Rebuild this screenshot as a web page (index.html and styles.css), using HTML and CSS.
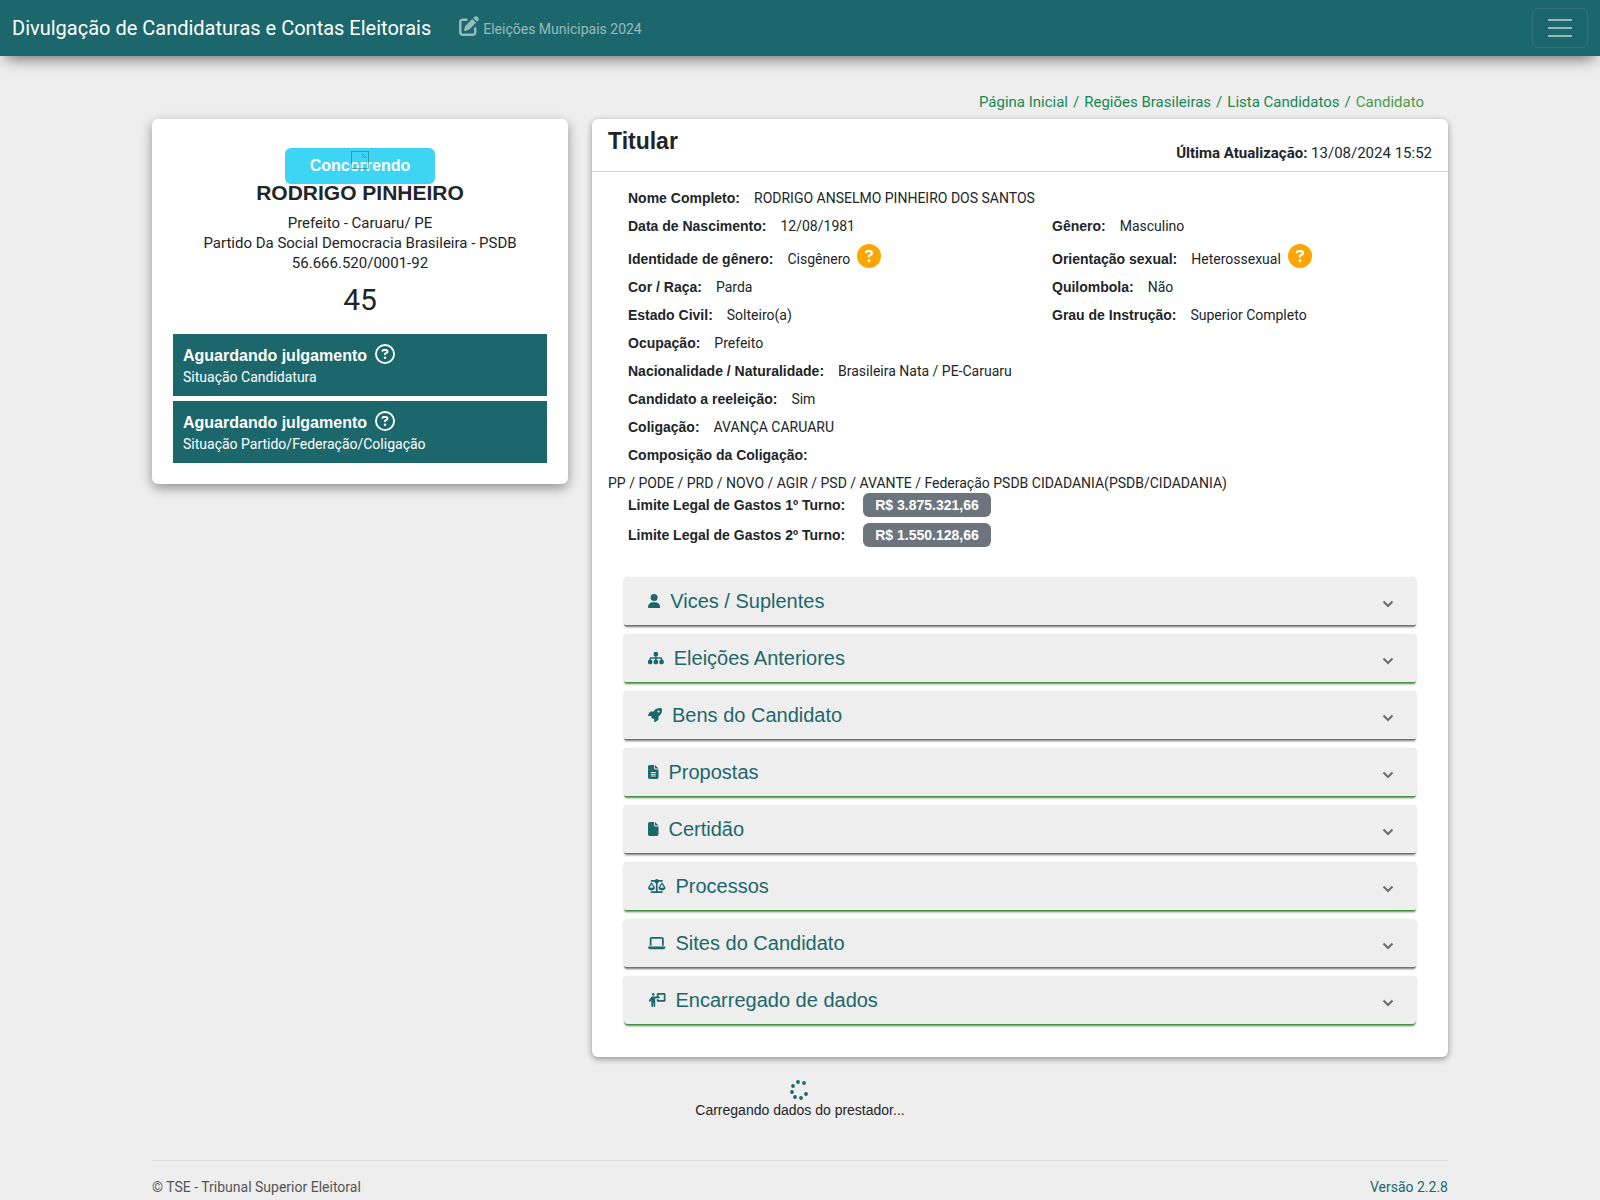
FILE: index.html
```html
<!DOCTYPE html>
<html lang="pt-BR">
<head>
<meta charset="utf-8">
<meta name="viewport" content="width=device-width, initial-scale=1">
<title>Divulgação de Candidaturas e Contas Eleitorais</title>
<link rel="stylesheet" href="styles.css">
</head>
<body>
<svg class="sprite" aria-hidden="true">
  <symbol id="help" viewBox="0 0 512 512"><path d="M169.800 165.300c7.900-22.300 29.100-37.300 52.800-37.300h58.300c34.900 0 63.100 28.300 63.100 63.100c0 22.600-12.100 43.500-31.700 54.800L280 264.400c-.2 13-10.900 23.600-24 23.600c-13.300 0-24-10.700-24-24V250.500c0-8.600 4.600-16.500 12.100-20.800l44.300-25.400c4.700-2.700 7.600-7.700 7.600-13.100c0-8.400-6.800-15.100-15.100-15.100H222.600c-3.400 0-6.400 2.100-7.500 5.300l-.4 1.200c-4.400 12.500-18.200 19-30.600 14.600s-19-18.200-14.600-30.600l.4-1.200zM224 352a32 32 0 1 1 64 0 32 32 0 1 1-64 0z"/></symbol>
  <symbol id="chevron" viewBox="0 0 12 8"><path d="M1.500 1.500 6 6l4.500-4.500" fill="none" stroke="currentColor" stroke-width="2"/></symbol>
</svg>

<nav class="navbar">
  <a class="brand" href="#">Divulgação de Candidaturas e Contas Eleitorais</a>
  <a class="election" href="#">
    <svg viewBox="0 0 512 512" width="20" height="20" aria-hidden="true"><path d="M471.6 21.7c-21.900-21.900-57.300-21.900-79.200 0L362.300 51.700l97.900 97.900 30.100-30.100c21.900-21.900 21.900-57.300 0-79.200L471.600 21.700zm-299.200 220c-6.100 6.100-10.800 13.600-13.500 21.900l-29.600 88.800c-2.900 8.600-.6 18.100 5.800 24.600s15.900 8.700 24.600 5.800l88.800-29.600c8.200-2.700 15.700-7.400 21.900-13.500L437.700 172.300 339.700 74.300 172.400 241.700zM96 64C43 64 0 107 0 160V416c0 53 43 96 96 96H352c53 0 96-43 96-96V320c0-17.700-14.300-32-32-32s-32 14.300-32 32v96c0 17.700-14.300 32-32 32H96c-17.700 0-32-14.300-32-32V160c0-17.700 14.300-32 32-32h96c17.700 0 32-14.300 32-32s-14.300-32-32-32H96z"/></svg>
    <span>Eleições Municipais 2024</span>
  </a>
  <button class="toggler" type="button" aria-label="Abrir menu">
    <svg viewBox="0 0 30 30" width="30" height="30" aria-hidden="true"><path d="M3 7h24M3 15h24M3 23h24" stroke="currentColor" stroke-width="2"/></svg>
  </button>
</nav>

<div class="container">
  <nav class="breadcrumb" aria-label="Navegação">
    <a href="#">Página Inicial</a><span>/</span><a href="#">Regiões Brasileiras</a><span>/</span><a href="#">Lista Candidatos</a><span>/</span><a class="current" href="#">Candidato</a>
  </nav>

  <main class="columns">
    <section class="card profile">
      <div class="status">
        Concorrendo
        <svg class="photo" viewBox="0 0 18 18" width="18" height="18" aria-hidden="true"><path d="M0 .5h18M.5 0v18M17.500 0v18M0 17.500h18" stroke="#1c676b" fill="none"/><path d="M11.500 2.500v4h4zM11.500 2.500l4 4" stroke="#1c676b" fill="none" opacity=".5"/><path d="M4 15c2-4 4-3 5-1l3-2 3 3z" fill="#4caf50" opacity=".5"/></svg>
      </div>
      <h1>RODRIGO PINHEIRO</h1>
      <p class="facts">Prefeito - Caruaru/ PE<br>Partido Da Social Democracia Brasileira - PSDB<br>56.666.520/0001-92</p>
      <p class="number">45</p>
      <div class="judgement">
        <h2>Aguardando julgamento <svg viewBox="0 0 512 512" width="20" height="20" aria-hidden="true"><circle cx="256" cy="256" r="232" fill="none" stroke="currentColor" stroke-width="48"/><use href="#help"/></svg></h2>
        <p>Situação Candidatura</p>
      </div>
      <div class="judgement">
        <h2>Aguardando julgamento <svg viewBox="0 0 512 512" width="20" height="20" aria-hidden="true"><circle cx="256" cy="256" r="232" fill="none" stroke="currentColor" stroke-width="48"/><use href="#help"/></svg></h2>
        <p>Situação Partido/Federação/Coligação</p>
      </div>
    </section>

    <section class="card holder">
      <header class="card-header">
        <h2>Titular</h2>
        <p><b>Última Atualização:</b> 13/08/2024 15:52</p>
      </header>
      <div class="card-body">
        <dl class="details">
          <div class="wide"><dt>Nome Completo:</dt><dd>RODRIGO ANSELMO PINHEIRO DOS SANTOS</dd></div>
          <div><dt>Data de Nascimento:</dt><dd>12/08/1981</dd></div>
          <div><dt>Gênero:</dt><dd>Masculino</dd></div>
          <div class="tall"><dt>Identidade de gênero:</dt><dd>Cisgênero</dd><svg class="hint" viewBox="0 0 512 512" width="24" height="24" aria-hidden="true"><circle cx="256" cy="256" r="256" fill="#ffa500"/><use href="#help"/></svg></div>
          <div class="tall"><dt>Orientação sexual:</dt><dd>Heterossexual</dd><svg class="hint" viewBox="0 0 512 512" width="24" height="24" aria-hidden="true"><circle cx="256" cy="256" r="256" fill="#ffa500"/><use href="#help"/></svg></div>
          <div><dt>Cor / Raça:</dt><dd>Parda</dd></div>
          <div><dt>Quilombola:</dt><dd>Não</dd></div>
          <div><dt>Estado Civil:</dt><dd>Solteiro(a)</dd></div>
          <div><dt>Grau de Instrução:</dt><dd>Superior Completo</dd></div>
          <div class="wide"><dt>Ocupação:</dt><dd>Prefeito</dd></div>
          <div class="wide"><dt>Nacionalidade / Naturalidade:</dt><dd>Brasileira Nata / PE-Caruaru</dd></div>
          <div class="wide"><dt>Candidato a reeleição:</dt><dd>Sim</dd></div>
          <div class="wide"><dt>Coligação:</dt><dd>AVANÇA CARUARU</dd></div>
          <div class="wide coalition"><dt>Composição da Coligação:</dt><dd>PP / PODE / PRD / NOVO / AGIR / PSD / AVANTE / Federação PSDB CIDADANIA(PSDB/CIDADANIA)</dd></div>
          <div class="wide limit"><dt>Limite Legal de Gastos 1º Turno:</dt><dd>R$ 3.875.321,66</dd></div>
          <div class="wide limit"><dt>Limite Legal de Gastos 2º Turno:</dt><dd>R$ 1.550.128,66</dd></div>
        </dl>

        <div class="accordion">
          <button type="button"><svg viewBox="0 0 448 512" height="14" aria-hidden="true"><path d="M224 256A128 128 0 1 0 224 0a128 128 0 1 0 0 256zm-45.700 48C79.800 304 0 383.800 0 482.300C0 498.700 13.300 512 29.700 512H418.300c16.400 0 29.700-13.300 29.700-29.700C448 383.800 368.200 304 269.700 304H178.300z"/></svg><span>Vices / Suplentes</span><svg class="chevron" width="12" height="8" aria-hidden="true"><use href="#chevron"/></svg></button>
          <button type="button"><svg viewBox="0 0 576 512" height="14" aria-hidden="true"><path d="M208 80c0-26.500 21.500-48 48-48h64c26.500 0 48 21.500 48 48v64c0 26.500-21.500 48-48 48h-8v40H464c30.900 0 56 25.100 56 56v32h8c26.500 0 48 21.500 48 48v64c0 26.500-21.500 48-48 48H464c-26.500 0-48-21.500-48-48V368c0-26.500 21.500-48 48-48h8V288c0-4.400-3.600-8-8-8H312v40h8c26.500 0 48 21.500 48 48v64c0 26.500-21.500 48-48 48H256c-26.500 0-48-21.500-48-48V368c0-26.500 21.500-48 48-48h8V280H112c-4.400 0-8 3.600-8 8v32h8c26.500 0 48 21.500 48 48v64c0 26.500-21.500 48-48 48H48c-26.500 0-48-21.500-48-48V368c0-26.500 21.500-48 48-48h8V288c0-30.900 25.100-56 56-56H264V192h-8c-26.500 0-48-21.500-48-48V80z"/></svg><span>Eleições Anteriores</span><svg class="chevron" width="12" height="8" aria-hidden="true"><use href="#chevron"/></svg></button>
          <button type="button"><svg viewBox="0 0 512 512" height="14" aria-hidden="true"><path d="M156.600 384.900L125.700 354c-8.500-8.500-11.500-20.800-7.700-32.200c3-8.900 7-20.500 11.800-33.800L24 288c-8.600 0-16.600-4.600-20.900-12.100s-4.200-16.700 .2-24.100l52.500-88.500c13-21.900 36.500-35.300 61.900-35.300l82.300 0c2.400-4 4.800-7.700 7.200-11.300C289.100-4.100 411.100-8.100 483.900 5.300c11.600 2.100 20.600 11.200 22.800 22.800c13.400 72.900 9.300 194.800-111.400 276.700c-3.500 2.400-7.300 4.800-11.300 7.200v82.300c0 25.400-13.400 49-35.300 61.900l-88.500 52.500c-7.400 4.400-16.600 4.500-24.100 .2s-12.100-12.200-12.100-20.900V380.800c-14.100 4.900-26.400 8.900-35.700 11.900c-11.200 3.600-23.400 .5-31.800-7.800zM384 168a40 40 0 1 0 0-80 40 40 0 1 0 0 80z"/></svg><span>Bens do Candidato</span><svg class="chevron" width="12" height="8" aria-hidden="true"><use href="#chevron"/></svg></button>
          <button type="button"><svg viewBox="0 0 384 512" height="14" aria-hidden="true"><path fill-rule="evenodd" d="M64 0C28.700 0 0 28.700 0 64V448c0 35.300 28.700 64 64 64H320c35.300 0 64-28.700 64-64V160H256c-17.700 0-32-14.300-32-32V0H64zM256 0V128H384L256 0zM112 256H272c8.800 0 16 7.200 16 16s-7.200 16-16 16H112c-8.800 0-16-7.200-16-16s7.200-16 16-16zm0 64H272c8.800 0 16 7.200 16 16s-7.200 16-16 16H112c-8.800 0-16-7.200-16-16s7.200-16 16-16zm0 64H272c8.800 0 16 7.200 16 16s-7.200 16-16 16H112c-8.800 0-16-7.200-16-16s7.200-16 16-16z"/></svg><span>Propostas</span><svg class="chevron" width="12" height="8" aria-hidden="true"><use href="#chevron"/></svg></button>
          <button type="button"><svg viewBox="0 0 384 512" height="14" aria-hidden="true"><path d="M0 64C0 28.700 28.700 0 64 0H224V128c0 17.700 14.300 32 32 32H384V448c0 35.300-28.700 64-64 64H64c-35.300 0-64-28.700-64-64V64zm384 64H256V0L384 128z"/></svg><span>Certidão</span><svg class="chevron" width="12" height="8" aria-hidden="true"><use href="#chevron"/></svg></button>
          <button type="button"><svg viewBox="0 0 640 512" height="14" aria-hidden="true"><path d="M384 32H512c17.700 0 32 14.300 32 32s-14.300 32-32 32H398.400c-5.200 25.800-22.900 47.100-46.400 57.300V448H512c17.700 0 32 14.300 32 32s-14.300 32-32 32H320 128c-17.700 0-32-14.300-32-32s14.300-32 32-32H288V153.300c-23.500-10.300-41.200-31.600-46.400-57.300H128c-17.700 0-32-14.300-32-32s14.300-32 32-32H256c14.600-19.400 37.800-32 64-32s49.400 12.600 64 32zm55.600 288H584.400L512 195.800 439.600 320zM512 416c-62.900 0-115.200-34-126-78.900c-2.600-11 1-22.300 6.700-32.100l95.200-163.200c5-8.600 14.200-13.800 24.100-13.800s19.100 5.300 24.100 13.800l95.200 163.200c5.700 9.800 9.300 21.100 6.700 32.100C627.200 382 574.900 416 512 416zM126.800 195.800L54.400 320H199.300L126.800 195.800zM.9 337.100c-2.600-11 1-22.300 6.700-32.100l95.200-163.200c5-8.600 14.200-13.800 24.100-13.800s19.100 5.300 24.100 13.800l95.200 163.200c5.700 9.800 9.300 21.100 6.700 32.100C242 382 189.700 416 126.800 416S11.700 382 .9 337.100z"/></svg><span>Processos</span><svg class="chevron" width="12" height="8" aria-hidden="true"><use href="#chevron"/></svg></button>
          <button type="button"><svg viewBox="0 0 640 512" height="14" aria-hidden="true"><path d="M128 32C92.700 32 64 60.700 64 96V352h64V96H512V352h64V96c0-35.300-28.700-64-64-64H128zM19.200 384C8.600 384 0 392.600 0 403.200C0 445.600 34.400 480 76.800 480H563.200c42.400 0 76.800-34.400 76.800-76.800c0-10.600-8.600-19.200-19.200-19.200H19.200z"/></svg><span>Sites do Candidato</span><svg class="chevron" width="12" height="8" aria-hidden="true"><use href="#chevron"/></svg></button>
          <button type="button"><svg viewBox="0 0 640 512" height="14" aria-hidden="true"><path d="M192 96a48 48 0 1 0 0-96 48 48 0 1 0 0 96zm-8 384V352h16V480c0 17.700 14.300 32 32 32s32-14.300 32-32V192h56 64 16c17.700 0 32-14.300 32-32s-14.300-32-32-32H384V64H576V256H384V224H320v48c0 26.500 21.500 48 48 48H592c26.500 0 48-21.500 48-48V48c0-26.500-21.500-48-48-48H368c-26.500 0-48 21.500-48 48v80H243.100 177.100c-33.700 0-64.900 17.700-82.300 46.600l-58.300 97c-9.100 15.100-4.200 34.800 10.900 43.900s34.800 4.200 43.900-10.900L120 256.900V480c0 17.700 14.300 32 32 32s32-14.300 32-32z"/></svg><span>Encarregado de dados</span><svg class="chevron" width="12" height="8" aria-hidden="true"><use href="#chevron"/></svg></button>
        </div>
      </div>
    </section>
  </main>

  <div class="loading" role="status">
    <svg viewBox="0 0 20 20" width="20" height="20" aria-hidden="true"><circle cx="8" cy="2" r="1.900"/><circle cx="14" cy="3" r="1.900"/><circle cx="3" cy="6" r="1.900"/><circle cx="2" cy="12" r="1.900"/><circle cx="5" cy="17" r="1.900"/><circle cx="11" cy="18" r="1.900"/><circle cx="16" cy="14" r="1.900"/></svg>
    <p>Carregando dados do prestador...</p>
  </div>

  <footer class="footer">
    <span>© TSE - Tribunal Superior Eleitoral</span>
    <a href="#">Versão 2.2.8</a>
  </footer>
</div>
</body>
</html>
```

FILE: styles.css
```css
* { box-sizing: border-box; }

body {
  margin: 0;
  background: #eee;
  color: #212529;
  font-family: Roboto, sans-serif;
  font-size: 14px;
  line-height: 20px;
}

h1, h2, p, dl, dd { margin: 0; }
a { text-decoration: none; }
.sprite { display: none; }

.navbar {
  display: flex;
  align-items: center;
  height: 56px;
  padding: 0 12px;
  background: #1c676b;
  box-shadow: 0 8px 16px -6px rgba(0, 0, 0, .6);
}
.brand { color: #fff; font-size: 20px; line-height: 28px; }
.election {
  display: flex;
  align-items: center;
  gap: 4px;
  margin-left: 28px;
  color: rgba(255, 255, 255, .55);
}
.election svg { fill: currentColor; margin-bottom: 4px; }
.election span { padding-top: 2px; }
.toggler {
  display: flex;
  margin-left: auto;
  padding: 4px 12px;
  border: 1px solid rgba(255, 255, 255, .1);
  border-radius: 6px;
  background: none;
  color: rgba(255, 255, 255, .55);
}

.container {
  max-width: 1320px;
  margin: 0 auto;
  padding: 0 12px;
}
.breadcrumb {
  display: flex;
  justify-content: flex-end;
  gap: 5px;
  padding: 36px 24px 7px 0;
  color: #198754;
  font-size: 15px;
}
.breadcrumb a { color: #198754; }
.breadcrumb .current { color: #4c9a4c; }

.columns {
  display: grid;
  grid-template-columns: 416fr 856fr;
  align-items: start;
  gap: 24px;
}
.card {
  border-radius: 6px;
  background: #fff;
}
.profile {
  padding: 29px 21px 21px;
  box-shadow: 0 4px 12px rgba(0, 0, 0, .4);
  text-align: center;
}
.status {
  position: relative;
  width: 150px;
  margin: 0 auto;
  border-radius: 6px;
  background: #3dd5f3;
  color: #fff;
  font: bold 16px/36px "Liberation Sans", sans-serif;
}
.photo {
  position: absolute;
  top: 3px;
  left: 66px;
  opacity: .5;
}
.profile h1 { font: bold 21px/18px "Liberation Sans", sans-serif; }
.facts { padding-top: 11px; font-size: 15px; }
.number { padding: 11px 0 19px; font-size: 30px; line-height: 31px; }
.judgement {
  height: 62px;
  padding: 10px;
  background: #1c676b;
  color: #fff;
  text-align: left;
}
.judgement + .judgement { margin-top: 5px; }
.judgement h2 {
  display: flex;
  align-items: center;
  gap: 8px;
  font: bold 16px/24px "Liberation Sans", sans-serif;
}
.judgement svg { margin-bottom: 4px; fill: currentColor; }
.judgement p { line-height: 18px; }

.holder { box-shadow: 0 2px 6px rgba(0, 0, 0, .4); }
.card-header {
  display: flex;
  justify-content: space-between;
  height: 53px;
  padding: 8px 16px;
  border-bottom: 1px solid #d3d3d3;
}
.card-header h2 { font: bold 23px/28px "Liberation Sans", sans-serif; }
.card-header p { padding-top: 16px; font-size: 15px; }
.card-body { padding: 12px 16px 32px; }

.details {
  display: grid;
  grid-template-columns: 53fr 50fr;
}
.details div {
  display: flex;
  align-items: center;
  height: 28px;
  padding-left: 20px;
}
.details dt {
  margin-right: 14px;
  font: bold 14px/20px "Liberation Sans", sans-serif;
}
.details .wide { grid-column: 1 / -1; }
.details .tall { height: 33px; align-items: flex-end; padding-bottom: 4px; }
.hint { margin: 0 0 1px 7px; fill: #fff; }
.details .coalition { display: block; height: 49px; line-height: 28px; }
.coalition dt { padding: 4px 0; }
.coalition dd { margin-left: -20px; }
.details .limit { height: 30px; }
.limit dt { margin-right: 18px; }
.limit dd {
  padding: 2px 12px;
  border-radius: 6px;
  background: #6c757d;
  color: #fff;
  font: bold 14px/20px "Liberation Sans", sans-serif;
}

.accordion {
  display: grid;
  gap: 8px;
  padding: 27px 16px 0;
}
.accordion button {
  display: flex;
  align-items: center;
  gap: 10px;
  height: 49px;
  padding: 0 22px 0 24px;
  border: 0;
  border-bottom: 1px solid #43943f;
  border-radius: 2px;
  background: #eee;
  box-shadow: 0 2px 2px -1px rgba(0, 0, 0, .45), 0 1px 3px rgba(0, 0, 0, .15);
  color: #1c676b;
  fill: currentColor;
  font: 20px/28px "Liberation Sans", sans-serif;
}
.accordion button:first-child { border-radius: 4px 4px 2px 2px; }
.accordion button:last-child { border-radius: 2px 2px 4px 4px; }
.accordion .chevron { margin: 5px 0 0 auto; color: #6c6c6c; }

.loading {
  width: 100%;
  padding: 23px 0 40px;
  text-align: center;
  font: 14px/20px "Liberation Sans", sans-serif;
}
.loading svg { display: block; margin: 0 auto; fill: #1c676b; }
.footer {
  display: flex;
  justify-content: space-between;
  padding: 16px 0 3px;
  border-top: 1px solid #dbdfe4;
  color: #555;
}
.footer a { color: #1c676b; }
```
